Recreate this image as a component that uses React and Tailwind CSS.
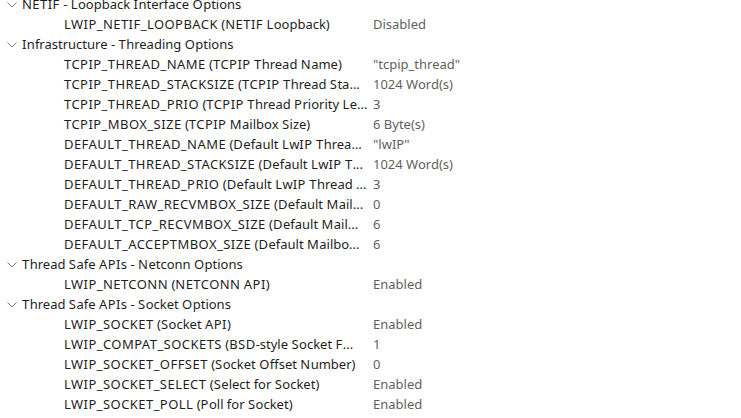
import React from "react";

const groups = [
  {
    title: "NETIF - Loopback Interface Options",
    items: [["LWIP_NETIF_LOOPBACK (NETIF Loopback)", "Disabled"]],
  },
  {
    title: "Infrastructure - Threading Options",
    items: [
      ["TCPIP_THREAD_NAME (TCPIP Thread Name)", "\"tcpip_thread\""],
      ["TCPIP_THREAD_STACKSIZE (TCPIP Thread Sta...", "1024 Word(s)"],
      ["TCPIP_THREAD_PRIO (TCPIP Thread Priority Le...", "3"],
      ["TCPIP_MBOX_SIZE (TCPIP Mailbox Size)", "6 Byte(s)"],
      ["DEFAULT_THREAD_NAME (Default LwIP Threa...", "\"lwIP\""],
      ["DEFAULT_THREAD_STACKSIZE (Default LwIP T...", "1024 Word(s)"],
      ["DEFAULT_THREAD_PRIO (Default LwIP Thread ...", "3"],
      ["DEFAULT_RAW_RECVMBOX_SIZE (Default Mail...", "0"],
      ["DEFAULT_TCP_RECVMBOX_SIZE (Default Mail...", "6"],
      ["DEFAULT_ACCEPTMBOX_SIZE (Default Mailbo...", "6"],
    ],
  },
  {
    title: "Thread Safe APIs - Netconn Options",
    items: [["LWIP_NETCONN (NETCONN API)", "Enabled"]],
  },
  {
    title: "Thread Safe APIs - Socket Options",
    items: [
      ["LWIP_SOCKET (Socket API)", "Enabled"],
      ["LWIP_COMPAT_SOCKETS (BSD-style Socket F...", "1"],
      ["LWIP_SOCKET_OFFSET (Socket Offset Number)", "0"],
      ["LWIP_SOCKET_SELECT (Select for Socket)", "Enabled"],
      ["LWIP_SOCKET_POLL (Poll for Socket)", "Enabled"],
    ],
  },
];

const Label = ({ text }) =>
  text.split(/([A-Z_]+)/).map((part, i) =>
    /^[A-Z_]+$/.test(part) ? (
      <span key={i} className="tracking-[0.45px]">{part}</span>
    ) : (
      <React.Fragment key={i}>{part}</React.Fragment>
    )
  );

const Chevron = () => (
  <svg width="10" height="6" viewBox="0 0 10 6" className="shrink-0">
    <path d="M0.5 0.5 L5 5 L9.5 0.5" fill="none" stroke="#7a7a7a" strokeWidth="1" />
  </svg>
);

export default function App() {
  return (
    <div
      className="w-[741px] h-[418px] overflow-hidden bg-white text-[13px] text-[#1e1e1e]"
      style={{ fontFamily: '"Noto Sans", sans-serif' }}
    >
      <div className="-mt-[5px] flex flex-col">
        {groups.map((g) => (
          <div key={g.title} className="flex flex-col">
            <div className="flex h-5 items-center pl-[7px] gap-[5px]">
              <Chevron />
              <span className="whitespace-nowrap">
                <Label text={g.title} />
              </span>
            </div>
            {g.items.map(([name, value]) => (
              <div key={name} className="flex h-5 items-center">
                <span className="w-[373px] shrink-0 whitespace-nowrap pl-16">
                  <Label text={name} />
                </span>
                <span className="whitespace-nowrap text-[#5f5f5f]">{value}</span>
              </div>
            ))}
          </div>
        ))}
      </div>
    </div>
  );
}
